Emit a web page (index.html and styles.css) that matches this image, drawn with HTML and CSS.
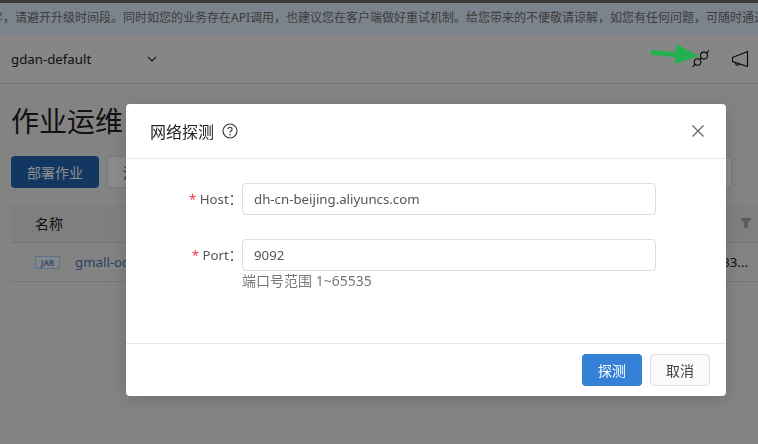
FILE: index.html
```html
<!doctype html>
<html>
<head>
    <title>作业运维</title>
    <link rel="stylesheet" href="styles.css">
</head>

<body>
    <div class="topline"></div>
    <div class="notice">年，请避开升级时间段。同时如您的业务存在API调用，也建议您在客户端做好重试机制。给您带来的不便敬请谅解，如您有任何问题，可随时通过工单联系我们</div>
    <div class="header">
        <div class="workspace">
            <span>gdan-default</span>
            <svg class="chevron" width="10" height="6" viewBox="0 0 10 6"><path d="M1 1l4 4 4-4" /></svg>
        </div>
        <div class="tools">
            <svg class="plug" width="20" height="20" viewBox="0 0 20 20">
                <circle cx="13" cy="6.600" r="3.500" />
                <circle cx="6.500" cy="13" r="3.300" />
                <path d="M15.500 4.100l2.500-2.500M4.100 15.400l-2.500 2.500M9.100 10.400l1.400-1.400" />
            </svg>
            <svg class="horn" width="18" height="18" viewBox="0 0 18 18">
                <path d="M1.500 7.500L16.500 1.500V16.500L1.500 11.500Z" />
                <path d="M4.500 12.500a2.200 2.200 0 0 0 4.200 1.200" />
            </svg>
        </div>
    </div>
    <div class="content">
        <h1 class="title">作业运维</h1>
        <div class="actions">
            <button class="btn btn-deploy">部署作业</button>
            <button class="btn btn-plain">流式作业</button>
            <div class="search"></div>
        </div>
        <div class="table-head">
            <span>名称</span>
            <svg class="funnel" width="12" height="12" viewBox="0 0 12 12"><path d="M0 1h12L8 6v5H4V6Z" /></svg>
        </div>
        <div class="table-row">
            <span class="jar">JAR</span>
            <a class="job-name">gmall-ods-kafka-job</a>
            <span class="job-time">2021-08-33...</span>
        </div>
    </div>

    <div class="mask">
        <div class="modal">
            <div class="modal-head">
                <span class="modal-title">网络探测</span>
                <svg class="help" width="16" height="16" viewBox="0 0 16 16">
                    <circle cx="8" cy="8" r="7" />
                    <path d="M5.900 6.300a2.100 2.100 0 1 1 3.200 1.800c-.7.400-1.100.8-1.100 1.600" />
                    <circle class="dot" cx="8" cy="11.700" r=".8" />
                </svg>
                <svg class="close" width="14" height="14" viewBox="0 0 14 14"><path d="M1.500 1.500l11 11M12.500 1.500l-11 11" /></svg>
            </div>
            <div class="modal-body">
                <div class="field">
                    <label class="field-label"><i>*</i> Host：</label>
                    <div class="field-box"><input class="field-input" type="text" value="dh-cn-beijing.aliyuncs.com" /></div>
                </div>
                <div class="field">
                    <label class="field-label"><i>*</i> Port：</label>
                    <div class="field-box">
                        <input class="field-input" type="text" value="9092" />
                        <p class="hint">端口号范围 1~65535</p>
                    </div>
                </div>
            </div>
            <div class="modal-foot">
                <button class="btn btn-primary">探测</button>
                <button class="btn btn-cancel">取消</button>
            </div>
        </div>
    </div>

    <svg class="arrow" width="56" height="26" viewBox="0 0 56 26">
        <path class="arrow-line" d="M4 9.500L30 12" />
        <path class="arrow-head" d="M27 1L50 13L26 21Z" />
    </svg>
</body>
</html>
```

FILE: styles.css
```css
* {
    box-sizing: border-box;
}
html, body {
    height: 100%;
}
body {
    margin: 0;
    overflow: hidden;
    background-color: #eeeeee;
    color: #222222;
    font-family: "Noto Sans", "Noto Sans CJK SC", sans-serif;
    font-size: 14px;
}
.topline {
    height: 3px;
    background-color: #6e6e6e;
}
.notice {
    height: 31px;
    line-height: 30px;
    text-indent: -9px;
    white-space: nowrap;
    overflow: hidden;
    background-color: #e0eeff;
    color: #707070;
    font-size: 12px;
}
.header {
    display: flex;
    justify-content: space-between;
    align-items: center;
    height: 50px;
    padding: 0 9px 0 11px;
    background-color: #f4f4f4;
    border-bottom: 1px solid #d0d0d0;
}
.workspace {
    display: flex;
    align-items: center;
    gap: 56px;
    font-size: 13.250px;
}
.chevron {
    fill: none;
    stroke: #333333;
    stroke-width: 1.200;
}
.tools {
    display: flex;
    align-items: center;
    gap: 20px;
}
.plug, .horn {
    fill: none;
    stroke: #111111;
    stroke-width: 1.100;
}
.content {
    padding: 0 0 0 11px;
}
.title {
    margin: 16px 0 14px;
    font-size: 28px;
    line-height: 42px;
    font-weight: 400;
}
.actions {
    display: flex;
    gap: 8px;
    padding-right: 26px;
    height: 32px;
}
.btn {
    height: 32px;
    border-radius: 4px;
    border: 1px solid transparent;
    font-family: inherit;
    font-size: 14px;
    padding: 0;
}
.btn-deploy {
    width: 88px;
    background-color: #2264b4;
    color: #ffffff;
}
.btn-plain {
    width: 88px;
    background-color: #ffffff;
    border-color: #dddddd;
    color: #333333;
}
.search {
    flex: 1;
    border: 1px solid #dddddd;
    border-radius: 4px;
    background-color: #ffffff;
}
.table-head {
    display: flex;
    justify-content: space-between;
    align-items: center;
    height: 38px;
    margin-top: 17px;
    padding: 0 6px 2px 24px;
    background-color: #e8e8e8;
    border-bottom: 1px solid #d8d8d8;
}
.funnel {
    fill: #aaaaaa;
}
.table-row {
    display: flex;
    align-items: center;
    height: 39px;
    padding: 0 10px 0 24px;
    border-bottom: 1px solid #d8d8d8;
}
.jar {
    width: 25px;
    height: 13px;
    margin-right: 15px;
    border: 1px solid #a3d1ff;
    background-color: #eef4fb;
    color: #7090ba;
    font-size: 8px;
    font-weight: 700;
    line-height: 11px;
    text-align: center;
}
.job-name {
    color: #4a76c0;
    font-size: 13.250px;
}
.job-time {
    margin-left: auto;
    font-size: 13.250px;
}
.mask {
    position: fixed;
    top: 0;
    left: 0;
    right: 0;
    bottom: 0;
    padding: 104px 0 0 126px;
    background-color: rgba(0, 0, 0, 0.45);
}
.modal {
    display: flex;
    flex-direction: column;
    width: 600px;
    height: 292px;
    background-color: #ffffff;
    border-radius: 4px;
    box-shadow: 0 4px 20px rgba(0, 0, 0, 0.15);
}
.modal-head {
    display: flex;
    align-items: center;
    height: 55px;
    padding: 0 21px 0 24px;
    border-bottom: 1px solid #e8e8e8;
}
.modal-title {
    font-size: 16px;
    color: #222222;
}
.help {
    margin-left: 8px;
    fill: none;
    stroke: #333333;
    stroke-width: 1.100;
}
.help .dot {
    fill: #333333;
    stroke: none;
}
.close {
    margin-left: auto;
    fill: none;
    stroke: #666666;
    stroke-width: 1.300;
}
.modal-body {
    flex: 1;
    padding-top: 24px;
}
.field {
    display: flex;
    margin-bottom: 24px;
}
.field-label {
    width: 116px;
    line-height: 32px;
    text-align: right;
    color: #555555;
    font-size: 13.250px;
    white-space: nowrap;
}
.field-label i {
    color: #f5333f;
    font-style: normal;
}
.field-box {
    width: 414px;
}
.field-input {
    display: block;
    width: 100%;
    height: 32px;
    padding: 0 11px;
    border: 1px solid #dddddd;
    border-radius: 4px;
    color: #555555;
    font-family: inherit;
    font-size: 13.250px;
}
.hint {
    margin: 0;
    color: #777777;
    font-size: 14px;
    line-height: 20px;
}
.modal-foot {
    display: flex;
    justify-content: flex-end;
    gap: 8px;
    height: 53px;
    padding: 10px 16px 0 0;
    border-top: 1px solid #e8e8e8;
}
.btn-primary {
    width: 60px;
    background-color: #3681d8;
    color: #ffffff;
}
.btn-cancel {
    width: 60px;
    background-color: #fafafa;
    border-color: #dddddd;
    color: #444444;
}
.arrow {
    position: fixed;
    top: 43px;
    left: 649px;
}
.arrow-line {
    fill: none;
    stroke: #22b14c;
    stroke-width: 5;
    stroke-linecap: round;
}
.arrow-head {
    fill: #22b14c;
}
```
